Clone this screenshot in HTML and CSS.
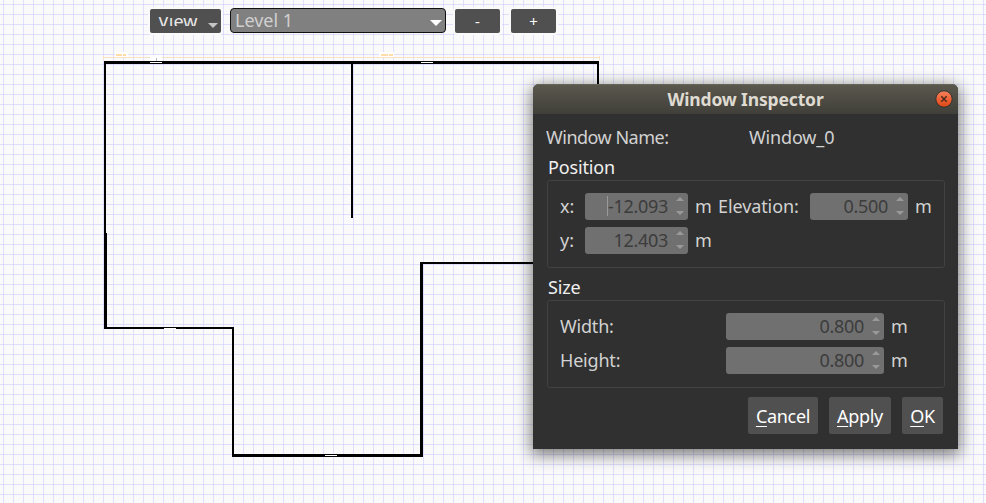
FILE: index.html
```
<!DOCTYPE html>
<html lang="en">
<head>
<meta charset="utf-8">
<title>Floor plan editor</title>
<link rel="stylesheet" href="styles.css">
</head>
<body>
<main class="canvas">
  <svg class="plan" width="986" height="503" shape-rendering="crispEdges">
    <g fill="#f9e2c4">
      <rect x="103" y="57" width="497" height="1"/>
      <rect x="103" y="56" width="1" height="4"/>
      <rect x="599" y="56" width="1" height="4"/>
    </g>
    <g fill="#fff">
      <rect x="115" y="52" width="13" height="5"/>
      <rect x="379" y="52" width="15" height="5"/>
      <rect x="150" y="55" width="12" height="6"/>
    </g>
    <g fill="#ffdca8">
      <rect x="116" y="54" width="6" height="2"/><rect x="123" y="54" width="3" height="2"/>
      <rect x="381" y="54" width="7" height="2"/><rect x="389" y="54" width="4" height="2"/>
    </g>
    <rect x="156" y="58" width="1" height="3" fill="#bbb"/>
    <g fill="#000">
      <rect x="104" y="61" width="495" height="3"/>
      <rect x="104" y="61" width="2" height="173"/>
      <rect x="104" y="233" width="3" height="96"/>
      <rect x="104" y="327" width="130" height="2"/>
      <rect x="232" y="327" width="2" height="130"/>
      <rect x="232" y="454" width="191" height="3"/>
      <rect x="420" y="262" width="3" height="195"/>
      <rect x="420" y="262" width="120" height="2"/>
      <rect x="351" y="61" width="2" height="157"/>
      <rect x="597" y="61" width="2" height="40"/>
    </g>
    <g fill="#fff">
      <rect x="150" y="62" width="12" height="1"/>
      <rect x="421" y="62" width="12" height="1"/>
      <rect x="164" y="328" width="12" height="1"/>
      <rect x="325" y="455" width="12" height="1"/>
    </g>
  </svg>

  <header class="toolbar">
    <button class="tool view"><span class="clip"><span class="view-text">View</span></span><i class="caret"></i></button>
    <div class="level"><span>Level 1</span><i class="caret big"></i></div>
    <button class="tool step">-</button>
    <button class="tool step plus">+</button>
  </header>

  <section class="dialog">
    <div class="titlebar"><h1>Window Inspector</h1>
      <svg class="close" width="18" height="18" viewBox="0 0 18 18">
        <defs><linearGradient id="orange" x2="0" y2="1"><stop offset="0" stop-color="#f58460"/><stop offset=".5" stop-color="#ef6236"/><stop offset="1" stop-color="#dd4814"/></linearGradient></defs>
        <circle cx="9" cy="9" r="8.2" fill="url(#orange)" stroke="#34332e"/>
        <path d="M6.3 6.3l5.4 5.4M11.7 6.3l-5.4 5.4" stroke="#4c2a1c" stroke-width="1.5"/>
      </svg>
    </div>
    <div class="name-row"><span class="t-name">Window Name:</span><span class="t-value">Window_0</span></div>
    <h2>Position</h2>
    <div class="group">
      <div class="row"><span class="axis">x:</span><div class="spin"><i class="cursor"></i><b>-12.093</b><i class="up"></i><i class="down"></i></div><span class="unit">m</span><span class="elev">Elevation:</span><div class="spin small"><b>0.500</b><i class="up"></i><i class="down"></i></div><span class="unit">m</span></div>
      <div class="row"><span class="axis">y:</span><div class="spin"><b>12.403</b><i class="up"></i><i class="down"></i></div><span class="unit">m</span></div>
    </div>
    <h2 class="size-title">Size</h2>
    <div class="group">
      <div class="row"><span class="dim">Width:</span><div class="spin wide"><b>0.800</b><i class="up"></i><i class="down"></i></div><span class="unit">m</span></div>
      <div class="row"><span class="dim">Height:</span><div class="spin wide"><b>0.800</b><i class="up"></i><i class="down"></i></div><span class="unit">m</span></div>
    </div>
    <footer>
      <button class="cancel"><u>C</u>ancel</button>
      <button class="apply"><u>A</u>pply</button>
      <button class="ok"><u>O</u>K</button>
    </footer>
  </section>
</main>
</body>
</html>
```
FILE: styles.css
```
* { box-sizing: border-box; }
body { margin: 0; overflow: hidden; font: 18px/22px "Noto Sans", "Open Sans", sans-serif; color: #d2d2d2; }
button { font: inherit; color: #fff; border: 0; padding: 0; white-space: nowrap; }
h1, h2 { margin: 0; font-size: inherit; }
.canvas {
  position: relative; width: 986px; height: 503px;
  background-color: #fafafa;
  background-image: linear-gradient(90deg, rgba(205,205,255,.6) 1px, transparent 1px), linear-gradient(rgba(205,205,255,.6) 1px, transparent 1px);
  background-size: 10px 10px;
  background-position: 3px 0, 0 4px;
}
.plan { position: absolute; left: 0; top: 0; }
.toolbar { position: relative; display: flex; align-items: flex-start; padding: 8px 0 0 150px; height: 36px; }
.tool { position: relative; height: 24px; margin-top: 1px; background: #505050; border-radius: 2px; box-shadow: 0 0 0 2px #fafafa; }
.view { width: 71px; margin-right: 9px; text-align: left; }
.clip { display: block; overflow: hidden; height: 9px; margin: 0 0 0 8px; width: 42px; }
.view-text { display: block; margin-top: -7px; color: #e8e8e8; }
.caret { position: absolute; right: 3px; bottom: 5px; border: 5px solid transparent; border-top-color: #c4c4c4; border-bottom: 0; }
.caret.big { right: 3px; bottom: 6px; border-width: 6px 6px 0; border-top-color: #fff; }
.level { position: relative; width: 216px; height: 25px; padding-left: 4px; line-height: 23px; margin-right: 9px; background: #808080; border: 1px solid #111; border-radius: 4px; color: #d0d0d0; }
.step { width: 45px; margin-right: 11px; font-size: 15px; line-height: 24px; }

.dialog { position: absolute; left: 533px; top: 84px; width: 425px; height: 365px; background: #303030; border-radius: 6px 6px 0 0; box-shadow: 0 4px 16px 2px rgba(0,0,0,.5); }
.titlebar { position: relative; height: 30px; background: linear-gradient(#5a574d, #403f39); border-top: 1px solid #66635a; border-radius: 6px 6px 0 0; text-align: center; }
h1 { font-size: 17.5px; line-height: 29px; letter-spacing: -.15px; color: #dfdbd2; }
.close { position: absolute; right: 5px; top: 5px; }
.name-row { display: flex; height: 42px; padding: 12px 0 0 13px; }
.t-name { width: 203px; letter-spacing: -.5px; }
.t-value { letter-spacing: -.15px; }
h2 { font-weight: 400; color: #f0f0f0; height: 24px; padding-left: 15px; letter-spacing: -.15px; }
.size-title { margin-top: 8px; }
.group { width: 398px; height: 88px; margin-left: 14px; padding: 12px 0 0 12px; border: 1px solid #424242; border-radius: 3px; }
.row { display: flex; height: 34px; line-height: 27px; }
.axis { width: 25px; }
.spin { position: relative; width: 103px; height: 27px; background: #707070; border-radius: 3px; color: #3c3c3c; padding-right: 20px; text-align: right; }
.spin b { font-weight: 400; letter-spacing: -.3px; }
.small { width: 98px; }
.wide { width: 158px; }
.unit { width: 30px; padding-left: 7px; }
.elev { width: 92px; letter-spacing: -.1px; }
.dim { width: 166px; letter-spacing: -.2px; }
.up, .down { position: absolute; right: 4px; border: 4px solid transparent; }
.up { top: 4px; border-top: 0; border-bottom-color: #999; }
.down { bottom: 5px; border-bottom: 0; border-top-color: #999; }
.cursor { position: absolute; left: 22px; top: 3px; width: 1px; height: 20px; background: #999; }
footer { display: flex; justify-content: flex-end; gap: 11px; padding: 9px 15px 0 0; }
footer button { height: 37px; background: #505050; border-radius: 2px; letter-spacing: -.3px; }
footer u { text-decoration-thickness: 1px; text-underline-offset: 3px; }
.cancel { width: 70px; }
.apply { width: 62px; }
.ok { width: 41px; }
```
